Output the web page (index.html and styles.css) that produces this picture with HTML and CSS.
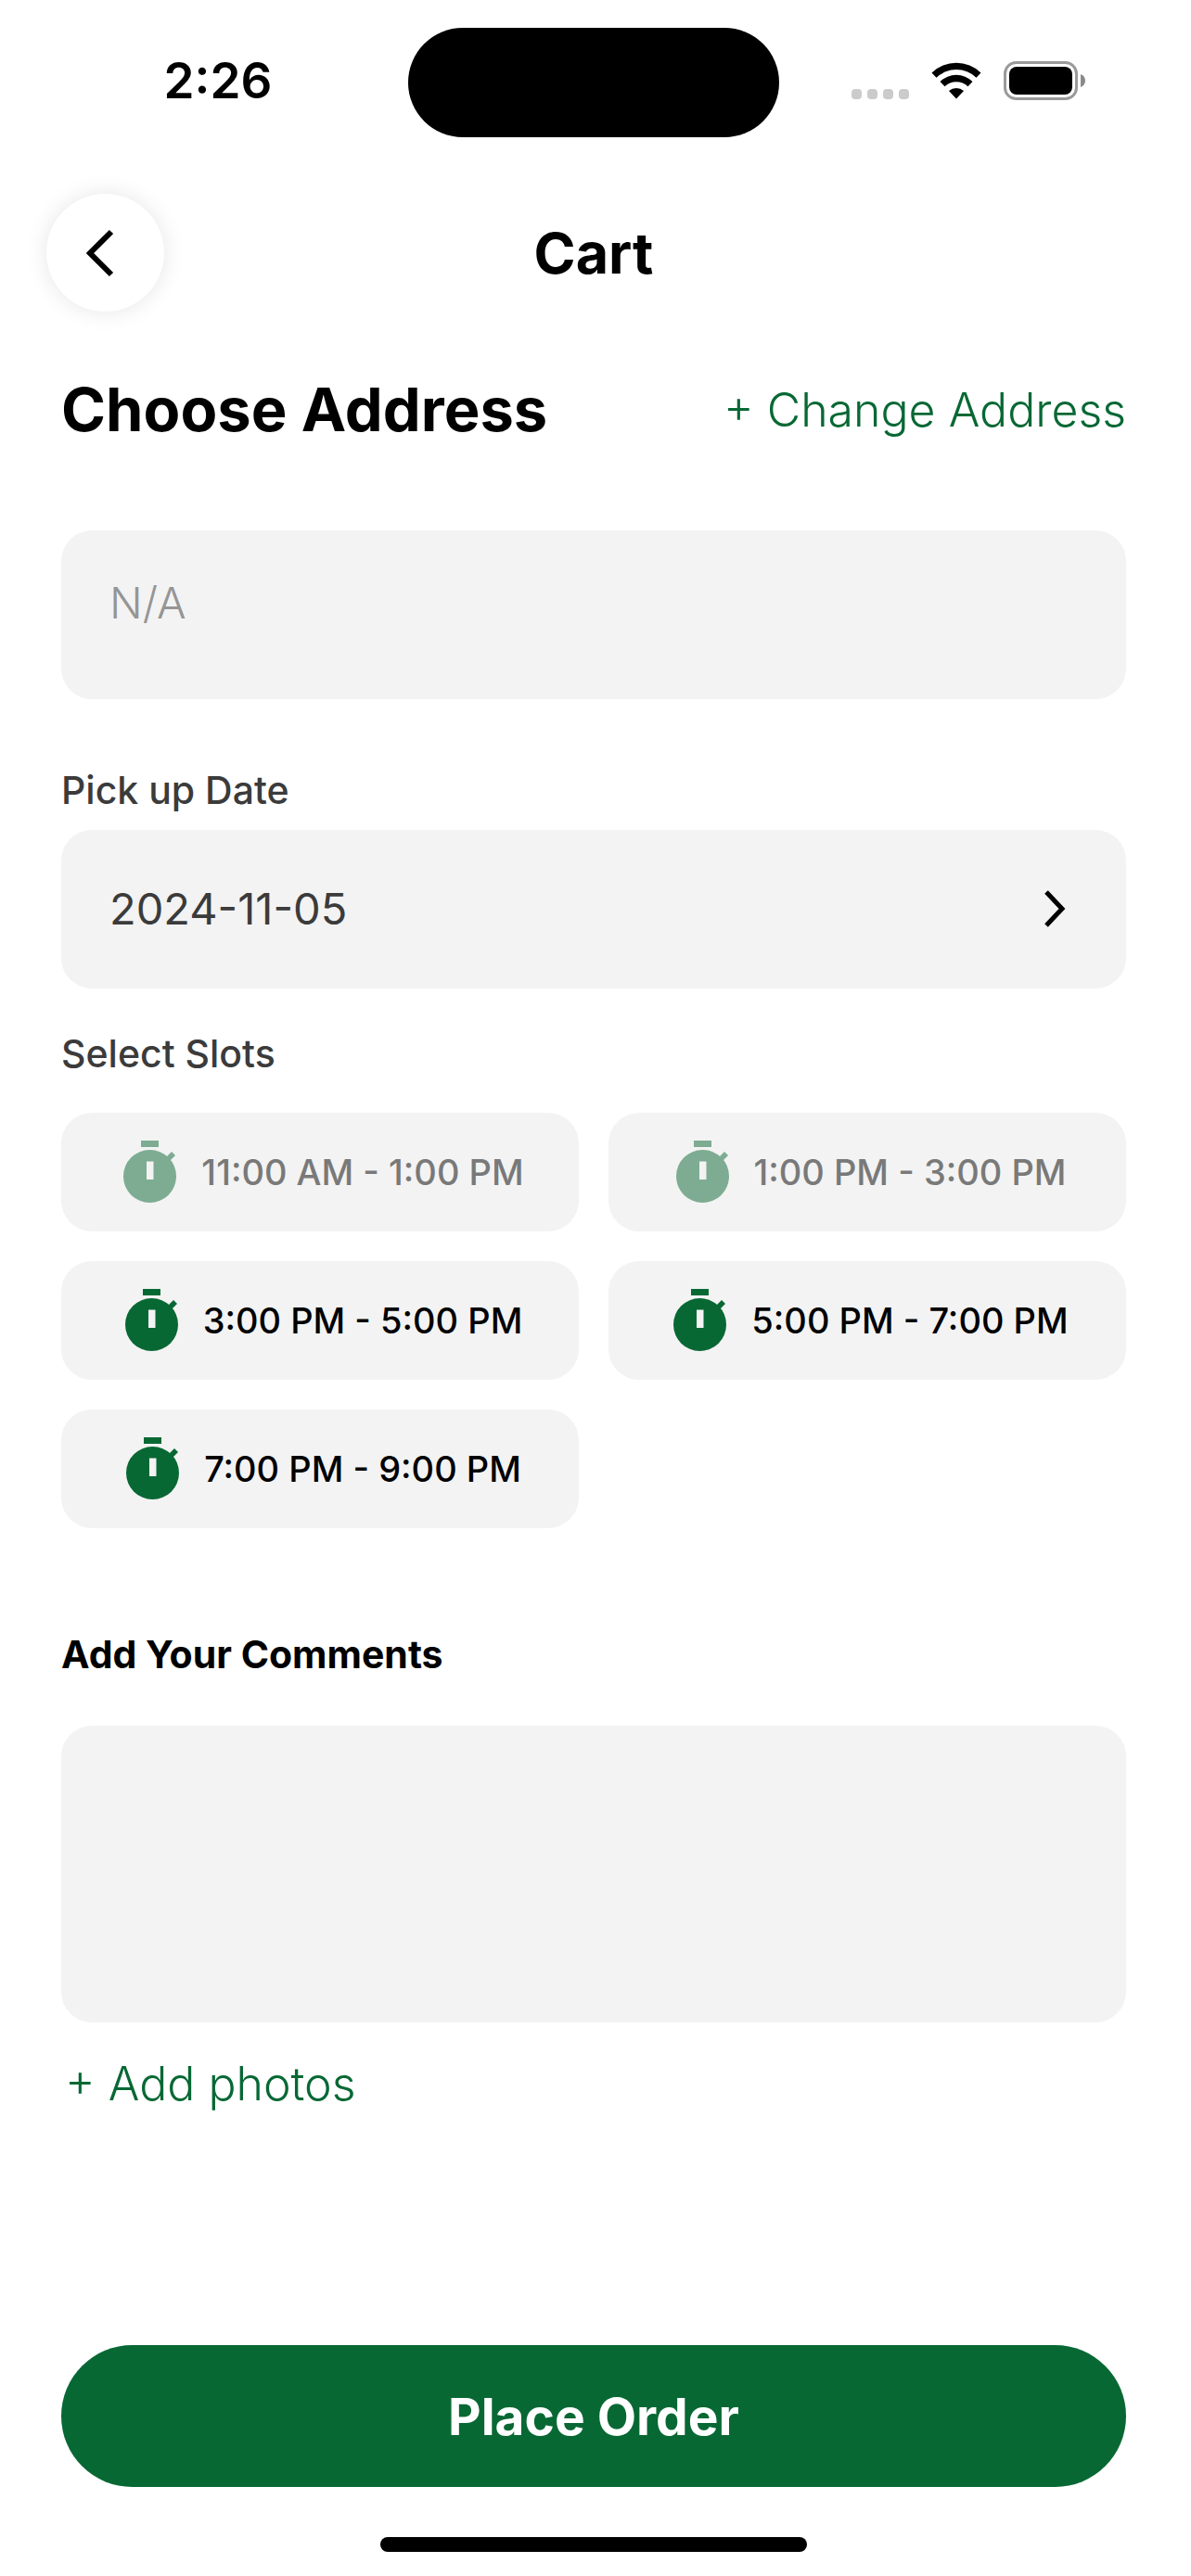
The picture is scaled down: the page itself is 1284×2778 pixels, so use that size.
FILE: index.html
```html
<!DOCTYPE html>
<html lang="en">
<head>
<meta charset="utf-8">
<meta name="viewport" content="width=device-width, initial-scale=1">
<title>Cart</title>
<link rel="stylesheet" href="styles.css">
</head>
<body>
<svg class="sprite" aria-hidden="true">
  <symbol id="stopwatch" viewBox="0 0 58 68">
    <path d="M19 0h19v7H19z"/>
    <path d="M45 19l7-7 4 4-7 7z"/>
    <path fill-rule="evenodd" d="M28.500 10a28.500 28.500 0 1 1 0 57a28.500 28.500 0 1 1 0-57zM25 22.500v19.500h7.500V22.500z"/>
  </symbol>
</svg>
<div class="screen">
  <div class="status">
    <time class="clock">2:26</time>
    <div class="island"></div>
    <div class="signals">
      <svg width="62" height="12" viewBox="0 0 62 12" class="dots" aria-hidden="true"><rect width="11" height="11" rx="4"/><rect x="17" width="11" height="11" rx="4"/><rect x="34" width="11" height="11" rx="4"/><rect x="51" width="11" height="11" rx="4"/></svg>
      <svg width="54" height="40" viewBox="0 0 54 40" aria-hidden="true"><path d="M0.500 11.500A38 38 0 0 1 53.500 11.500L48.500 16.700A31 31 0 0 0 5.500 16.700z"/><path d="M9.500 21A25 25 0 0 1 44.500 21L39.500 26.200A18 18 0 0 0 14.500 26.200z"/><path d="M19 31A12.500 12.500 0 0 1 35 31L27 39.500z"/></svg>
      <svg width="88" height="42" viewBox="0 0 88 42" aria-hidden="true"><rect x="1.500" y="1.500" width="77" height="39" rx="12" fill="none" stroke="#9a9a9a" stroke-width="3"/><rect x="6" y="6" width="68" height="30" rx="8"/><path d="M83 14q5 2 5 7t-5 7z" fill="#8a8a8a"/></svg>
    </div>
  </div>

  <header class="topbar">
    <button class="back" aria-label="Back"><svg width="30" height="52" viewBox="0 0 30 52" aria-hidden="true"><path d="M27 3L4 26L27 49" fill="none" stroke="#000" stroke-width="6"/></svg></button>
    <h1>Cart</h1>
  </header>

  <main class="content">
    <div class="address-head">
      <h2>Choose Address</h2>
      <a class="action" href="#address">+ Change Address</a>
    </div>
    <textarea class="field address" id="address" placeholder="N/A" aria-label="Address"></textarea>

    <label class="label" for="date">Pick up Date</label>
    <button class="field date" id="date">2024-11-05<svg width="24" height="40" viewBox="0 0 24 40" aria-hidden="true"><path d="M3 2L20 20L3 38" fill="none" stroke="#000" stroke-width="5"/></svg></button>

    <p class="label slots-label">Select Slots</p>
    <div class="slots">
      <button class="field slot" disabled><svg class="watch" aria-hidden="true"><use href="#stopwatch"/></svg>11:00 AM - 1:00 PM</button>
      <button class="field slot" disabled><svg class="watch" aria-hidden="true"><use href="#stopwatch"/></svg>1:00 PM - 3:00 PM</button>
      <button class="field slot"><svg class="watch" aria-hidden="true"><use href="#stopwatch"/></svg>3:00 PM - 5:00 PM</button>
      <button class="field slot"><svg class="watch" aria-hidden="true"><use href="#stopwatch"/></svg>5:00 PM - 7:00 PM</button>
      <button class="field slot"><svg class="watch" aria-hidden="true"><use href="#stopwatch"/></svg>7:00 PM - 9:00 PM</button>
    </div>

    <label class="comments-label" for="comments">Add Your Comments</label>
    <textarea class="field comments" id="comments"></textarea>
    <a class="action photos" href="#photos">+ Add photos</a>
  </main>

  <footer class="footer">
    <button class="order">Place Order</button>
    <div class="home"></div>
  </footer>
</div>
</body>
</html>
```
FILE: styles.css
```css
* { box-sizing: border-box; margin: 0; }
body { background: #fff; color: #000; font-family: Inter, "Liberation Sans", sans-serif; }
button, textarea { font: inherit; color: inherit; border: 0; padding: 0; }
a { text-decoration: none; }
.sprite { display: none; }
.screen { min-height: 100vh; padding-right: 4px; display: flex; flex-direction: column; }

.status { display: grid; grid-template-columns: 1fr 400px 1fr; align-items: center; padding-top: 30px; }
.clock { font-size: 53px; line-height: 64px; font-weight: 600; text-align: center; padding: 0 0 4px 30px; }
.island { height: 118px; border-radius: 59px; background: #000; }
.signals { display: flex; align-items: center; justify-content: flex-end; gap: 24px; padding: 0 110px 4px 0; }
.dots { fill: #cbcbcb; align-self: flex-end; }

.topbar { display: grid; grid-template-columns: 127px 1fr 127px; align-items: center; padding: 61px 50px 0; }
.back { width: 127px; height: 127px; border-radius: 50%; background: #fff; box-shadow: 0 0 24px rgba(0, 0, 0, 0.1); display: grid; place-items: center; padding-right: 12px; }
h1 { font-size: 61px; line-height: 72px; font-weight: 700; text-align: center; }

.content { padding: 0 66px; display: flex; flex-direction: column; align-items: stretch; }
.address-head { display: flex; justify-content: space-between; align-items: center; padding-top: 68px; }
h2 { font-size: 65px; line-height: 76px; font-weight: 700; }
.action { color: #086834; font-size: 50px; line-height: 60px; font-weight: 300; }

.field { background: #f3f3f3; border-radius: 33px; display: block; width: 100%; resize: none; }
.address { height: 182px; margin-top: 92px; padding: 48px 52px; font-size: 47px; line-height: 60px; font-weight: 300; }
.address::placeholder { color: #959595; opacity: 1; }
.label { color: #3b3b3b; font-size: 41px; line-height: 48px; font-weight: 500; margin-top: 74px; }
.date { height: 171px; margin-top: 19px; padding: 0 65px 2px 52px; display: flex; align-items: center; justify-content: space-between; color: #3b3b3b; font-size: 47px; font-weight: 400; }
.slots-label { margin-top: 46px; }
.slots { display: grid; grid-template-columns: 1fr 1fr; gap: 32px; margin-top: 40px; }
.slot { height: 128px; padding-left: 8px; display: flex; align-items: center; justify-content: center; gap: 26px; font-size: 38px; font-weight: 500; }
.slot:disabled { color: #797979; }
.watch { width: 58px; height: 68px; fill: #086834; }
.slot:disabled .watch { fill: #7dac92; }
.comments-label { margin-top: 112px; font-size: 41px; line-height: 48px; font-weight: 700; }
.comments { height: 320px; margin-top: 53px; padding: 48px 52px; font-size: 47px; }
.photos { margin-top: 36px; padding-left: 4px; align-self: flex-start; }

.footer { margin-top: auto; padding: 0 66px 26px; }
.order { display: block; width: 100%; height: 153px; border-radius: 77px; background: #086834; color: #fff; font-size: 55px; font-weight: 700; }
.home { width: 40%; height: 16px; border-radius: 8px; background: #000; margin: 54px auto 0; }
```
